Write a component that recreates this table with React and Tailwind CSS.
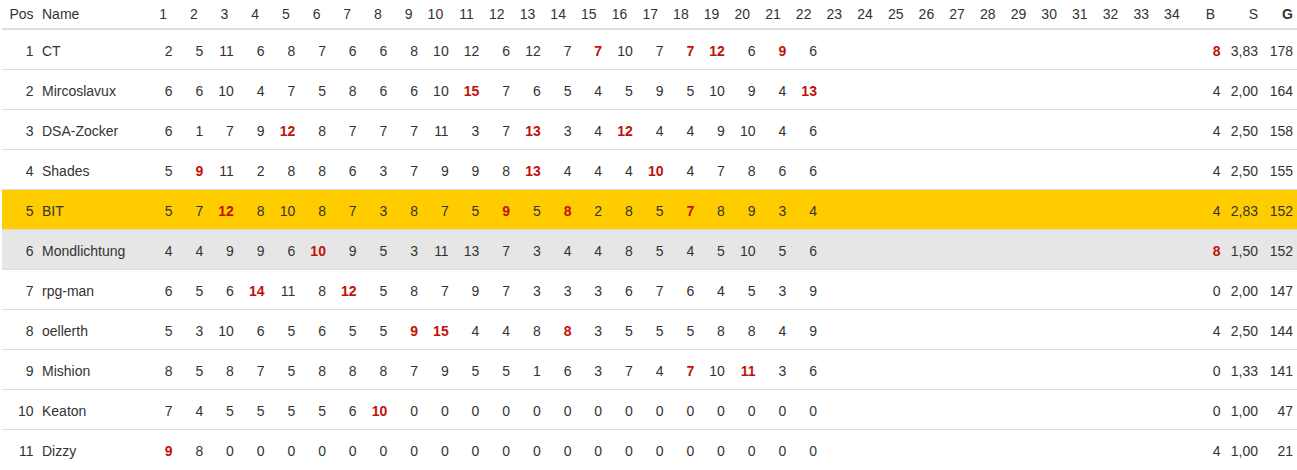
const rows = [
  { pos: 1, name: 'CT', r: '2 5 11 6 8 7 6 6 8 10 12 6 12 7 *7 10 7 *7 *12 6 *9 6', b: '*8', s: '3,83', g: 178 },
  { pos: 2, name: 'Mircoslavux', r: '6 6 10 4 7 5 8 6 6 10 *15 7 6 5 4 5 9 5 10 9 4 *13', b: '4', s: '2,00', g: 164 },
  { pos: 3, name: 'DSA-Zocker', r: '6 1 7 9 *12 8 7 7 7 11 3 7 *13 3 4 *12 4 4 9 10 4 6', b: '4', s: '2,50', g: 158 },
  { pos: 4, name: 'Shades', r: '5 *9 11 2 8 8 6 3 7 9 9 8 *13 4 4 4 *10 4 7 8 6 6', b: '4', s: '2,50', g: 155 },
  { pos: 5, name: 'BIT', r: '5 7 *12 8 10 8 7 3 8 7 5 *9 5 *8 2 8 5 *7 8 9 3 4', b: '4', s: '2,83', g: 152, hl: 'me' },
  { pos: 6, name: 'Mondlichtung', r: '4 4 9 9 6 *10 9 5 3 11 13 7 3 4 4 8 5 4 5 10 5 6', b: '*8', s: '1,50', g: 152, hl: 'alt' },
  { pos: 7, name: 'rpg-man', r: '6 5 6 *14 11 8 *12 5 8 7 9 7 3 3 3 6 7 6 4 5 3 9', b: '0', s: '2,00', g: 147 },
  { pos: 8, name: 'oellerth', r: '5 3 10 6 5 6 5 5 *9 *15 4 4 8 *8 3 5 5 5 8 8 4 9', b: '4', s: '2,50', g: 144 },
  { pos: 9, name: 'Mishion', r: '8 5 8 7 5 8 8 8 7 9 5 5 1 6 3 7 4 *7 10 *11 3 6', b: '0', s: '1,33', g: 141 },
  { pos: 10, name: 'Keaton', r: '7 4 5 5 5 5 6 *10 0 0 0 0 0 0 0 0 0 0 0 0 0 0', b: '0', s: '1,00', g: 47 },
  { pos: 11, name: 'Dizzy', r: '*9 8 0 0 0 0 0 0 0 0 0 0 0 0 0 0 0 0 0 0 0 0', b: '4', s: '1,00', g: 21 },
]

const rounds = Array.from({ length: 34 }, (_, i) => i + 1)

const gridCols =
  'grid grid-cols-[35.5px_108.3px_repeat(34,30.7px)_35.4px_37.5px_1fr]'

const Score = ({ value }) => {
  if (!value) return null
  if (value.startsWith('*')) {
    return <span className="font-bold text-[#c4100a]">{value.slice(1)}</span>
  }
  return <span>{value}</span>
}

const App = () => {
  return (
    <div className="w-[1297px] bg-white font-['Liberation_Sans',Arial,sans-serif] text-[14px] leading-5 text-[#333]">
      <div className="ml-[2px]">
        {/* Header */}
        <div className={`${gridCols} h-[30px] border-b-2 border-[#ddd] items-center`}>
          <div className="text-right pr-[4px]">Pos</div>
          <div className="pl-[4.5px]">Name</div>
          {rounds.map((n) => (
            <div key={n} className="text-right pr-[9.5px]">{n}</div>
          ))}
          <div className="text-right pr-[9.5px]">B</div>
          <div className="text-right pr-[4px]">S</div>
          <div className="text-right pr-[4px] font-bold">G</div>
        </div>

        {/* Rows */}
        {rows.map((row, idx) => {
          const scores = row.r.split(' ')
          const bg =
            row.hl === 'me' ? 'bg-[#ffcc00]' : row.hl === 'alt' ? 'bg-[#e6e6e6]' : 'bg-white'
          return (
            <div
              key={row.pos}
              className={`${gridCols} items-center pt-[2px] ${bg} ${idx === 0 ? 'h-[39px]' : 'h-[40px] border-t border-[#ddd]'}`}
            >
              <div className="text-right pr-[4px]">{row.pos}</div>
              <div className="pl-[4.5px] whitespace-nowrap">{row.name}</div>
              {rounds.map((n) => (
                <div key={n} className="text-right pr-[4px]">
                  <Score value={scores[n - 1]} />
                </div>
              ))}
              <div className="text-right pr-[4px]">
                <Score value={row.b} />
              </div>
              <div className="text-right pr-[4px]">{row.s}</div>
              <div className="text-right pr-[4px]">{row.g}</div>
            </div>
          )
        })}
      </div>
    </div>
  )
}

export default App
